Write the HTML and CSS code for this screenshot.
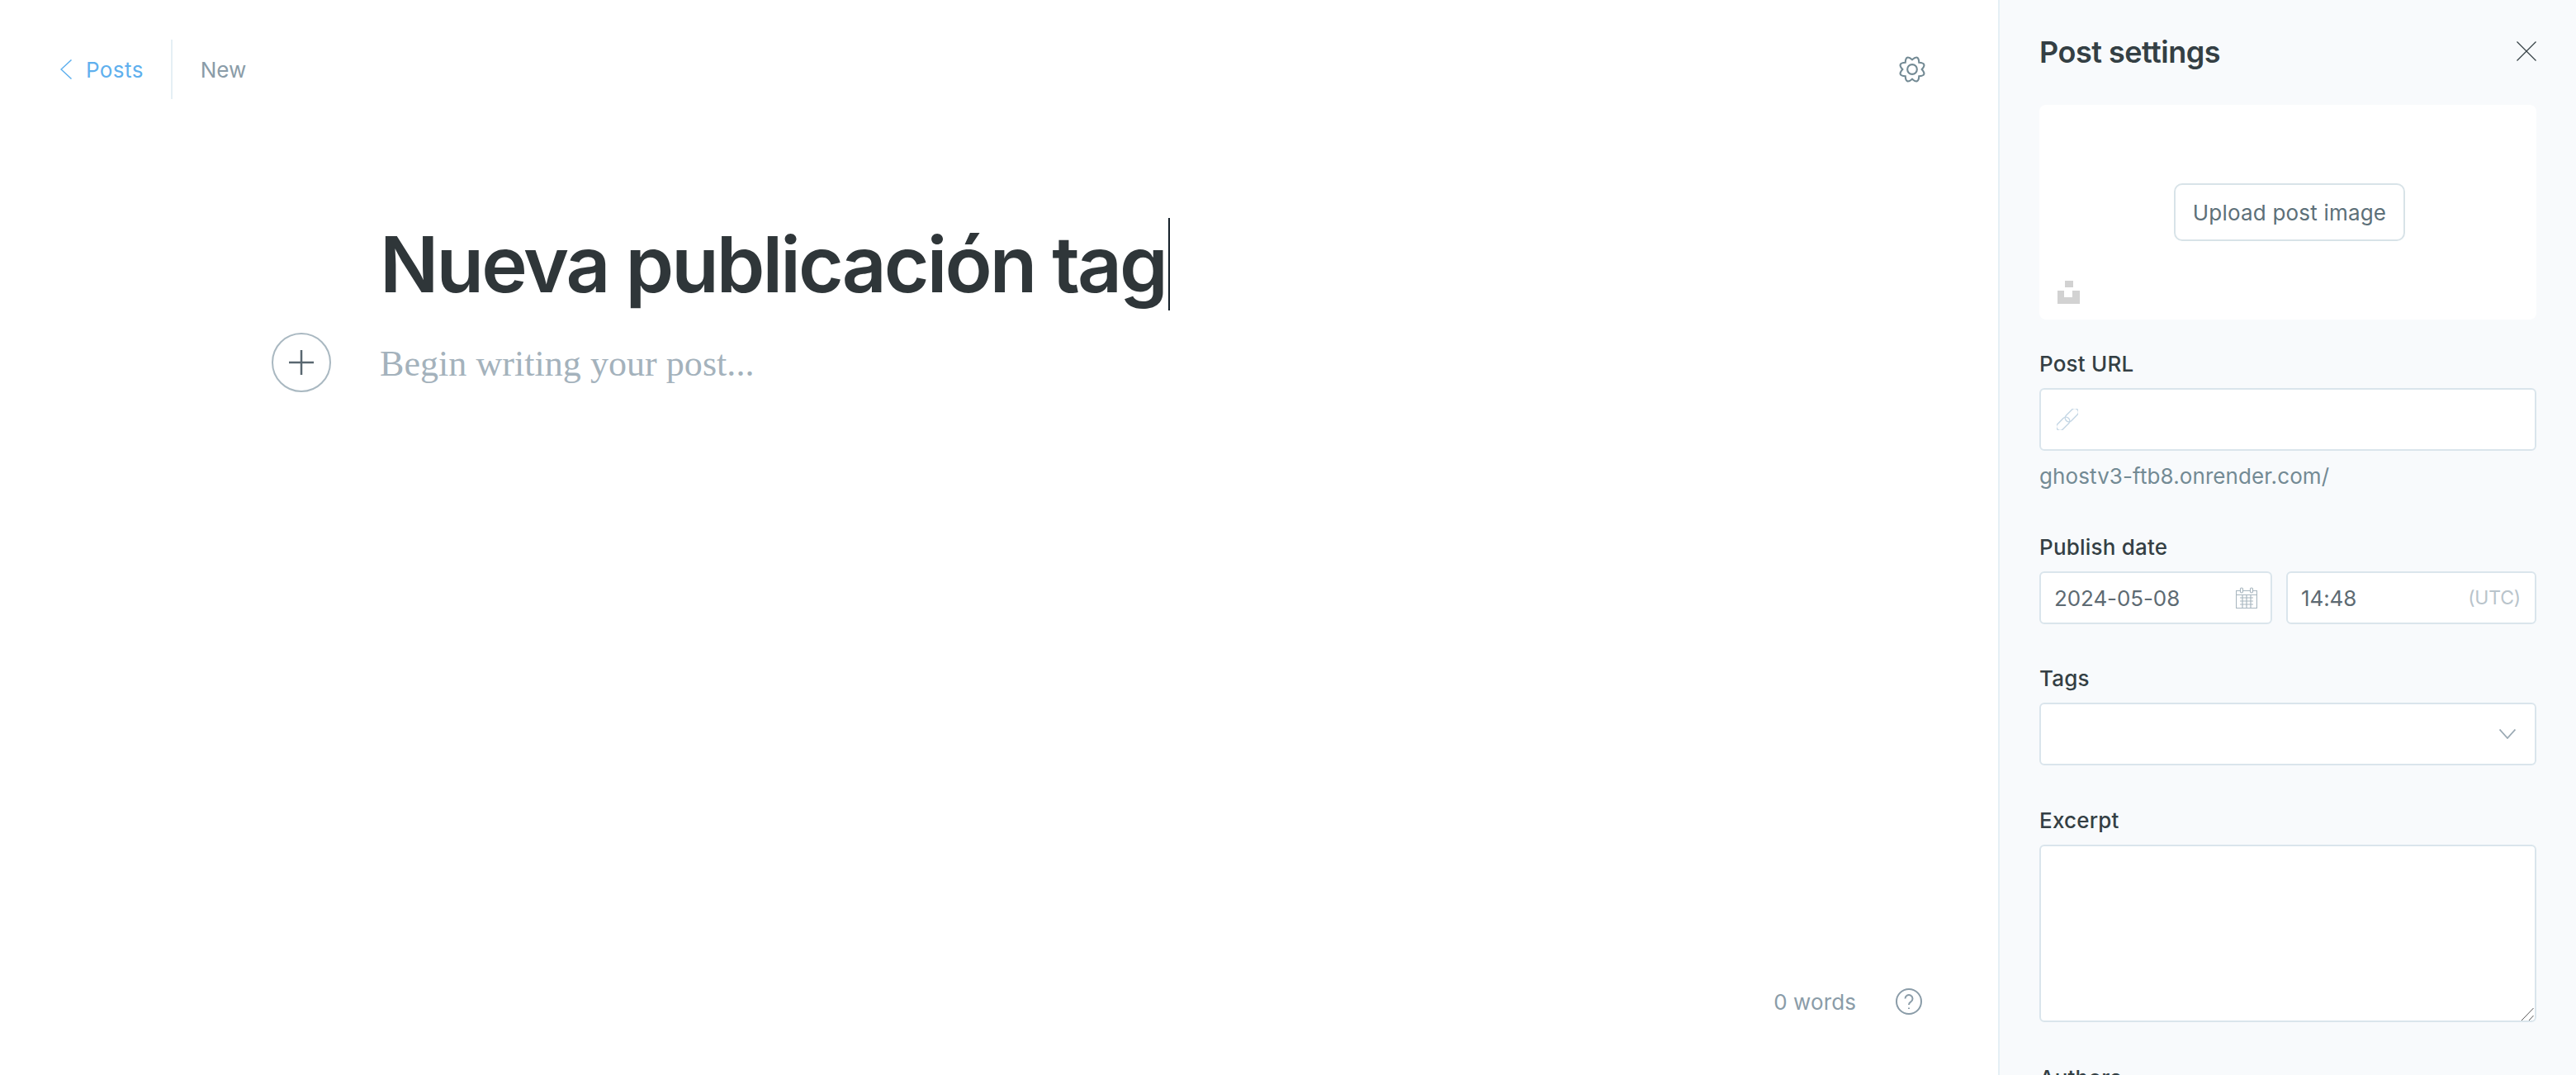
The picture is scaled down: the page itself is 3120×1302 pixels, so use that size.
FILE: index.html
```html
<!DOCTYPE html>
<html lang="en">
<head>
<meta charset="utf-8">
<title>Post settings</title>
<link rel="stylesheet" href="styles.css">
</head>
<body>
<div class="app">
  <main class="editor">
    <header class="topbar">
      <div class="crumbs">
        <a class="back">
          <svg class="back-icon" viewBox="0 0 14 24"><path d="M13.500.500 1 12l12.500 11.500"/></svg>
          <span>Posts</span>
        </a>
        <span class="status">New</span>
      </div>
      <svg class="gear" viewBox="0 0 32 32"><path d="M27 16Q33.500 23.300 23.800 23.800 23.300 33.500 16 27 8.700 33.500 8.200 23.800-1.500 23.300 5 16-1.500 8.700 8.200 8.200 8.700-1.500 16 5 23.300-1.500 23.800 8.200 33.500 8.700 27 16Z"/><circle cx="16" cy="16" r="5.500"/></svg>
    </header>
    <section class="content">
      <div class="column">
        <h1 class="title">Nueva publicación tag<span class="caret"></span></h1>
        <div class="body-line">
          <span class="plus">
            <svg viewBox="0 0 32 32"><path d="M16 1v30M1 16h30"/></svg>
          </span>
          <p class="placeholder">Begin writing your post...</p>
        </div>
      </div>
    </section>
    <footer class="status-bar">
      <span class="words">0 words</span>
      <span class="help">
        <svg viewBox="0 0 32 32"><circle cx="16" cy="16" r="15"/><path d="M11.500 12.500a4.500 4.500 0 1 1 6.800 3.900c-1.500.9-2.300 1.700-2.300 3.600"/><path d="M16 23.500v1.500"/></svg>
      </span>
    </footer>
  </main>
  <aside class="settings">
    <header class="settings-head">
      <h2>Post settings</h2>
      <svg class="close" viewBox="0 0 24 24"><path d="M.5.5l23 23M23.500.5l-23 23"/></svg>
    </header>
    <div class="image-box">
      <span class="upload">Upload post image</span>
      <svg class="unsplash" viewBox="0 0 28 28"><path d="M10 0h10v8H10zM1 12h8v8h10v-8h9v16H1z"/></svg>
    </div>
    <div class="field field-url">
      <label class="label">Post URL</label>
      <div class="input input-tall">
        <svg class="link-icon" viewBox="0 0 26 26"><g transform="rotate(-45 13 13)"><rect x="-4" y="8.500" width="19" height="9" rx="4.500"/><rect x="11" y="8.500" width="19" height="9" rx="4.500"/></g></svg>
      </div>
      <p class="hint">ghostv3-ftb8.onrender.com/</p>
    </div>
    <div class="field field-date">
      <label class="label">Publish date</label>
      <div class="date-row">
        <div class="input input-date">
          <span>2024-05-08</span>
          <svg class="calendar" viewBox="0 0 26 26"><path d="M.5 4.500h25v21H.5zM.5 9.500h25M5 13h16M5 17h16M5 21h16M8 10v15M13 10v15M18 10v15"/><rect x="5.500" y="1" width="3" height="6" rx="1.500"/><rect x="17.500" y="1" width="3" height="6" rx="1.500"/></svg>
        </div>
        <div class="input input-time">
          <span>14:48</span>
          <span class="tz">(UTC)</span>
        </div>
      </div>
    </div>
    <div class="field">
      <label class="label">Tags</label>
      <div class="input input-tall input-select">
        <svg class="chevron" viewBox="0 0 20 12"><path d="M.5.500 10 11 19.500.500"/></svg>
      </div>
    </div>
    <div class="field field-excerpt">
      <label class="label">Excerpt</label>
      <div class="excerpt-wrap">
        <textarea class="excerpt"></textarea>
        <svg class="grip" viewBox="0 0 15 15"><path d="M0 15 14.500 0M9 15l5.500-6"/></svg>
      </div>
    </div>
    <div class="field">
      <label class="label">Authors</label>
    </div>
  </aside>
</div>
</body>
</html>
```

FILE: styles.css
```css
* { box-sizing: border-box; }
html, body { margin: 0; height: 1302px; overflow: hidden; background: #fff; }
body { font-family: Inter, "Liberation Sans", sans-serif; color: #343f44; }
.app { display: flex; height: 1302px; overflow: hidden; }

.editor { flex: 1; min-width: 0; display: flex; flex-direction: column; }
.topbar { display: flex; align-items: center; justify-content: space-between; padding: 48px 87px 0 73px; height: 120px; }
.crumbs { display: flex; align-items: center; height: 72px; font-size: 26px; letter-spacing: .4px; }
.back { display: flex; align-items: center; gap: 17px; height: 72px; padding-right: 33px; border-right: 2px solid #e5eff5; color: #5fb0ee; }
.back-icon { width: 14px; height: 24px; fill: none; stroke: #5fb0ee; stroke-width: 1.500; }
.status { margin-left: 34px; color: #8a9ca8; letter-spacing: 0; }
.gear { width: 34px; height: 34px; overflow: visible; fill: none; stroke: #738a94; stroke-width: 2; }

.content { flex: 1; padding: 144px 0 0 460px; }
.title { margin: 0; display: flex; align-items: center; height: 112px; font-size: 94px; line-height: 112px; font-weight: 600; letter-spacing: -2.900px; color: #2f3639; white-space: nowrap; }
.caret { width: 2px; height: 112px; margin-left: 3px; background: #15212a; }
.body-line { position: relative; margin-top: 39px; }
.plus { position: absolute; left: -131px; top: -12px; width: 72px; height: 72px; display: flex; align-items: center; justify-content: center; border: 2px solid #a9b8c1; border-radius: 50%; }
.plus svg { width: 32px; height: 32px; fill: none; stroke: #596770; stroke-width: 2.500; }
.placeholder { margin: 0; font-family: "Liberation Serif", serif; font-size: 44px; line-height: 52px; color: #a4b2bc; letter-spacing: .05px; }

.status-bar { display: flex; align-items: center; justify-content: flex-end; gap: 48px; height: 72px; padding-right: 92px; margin-bottom: 53px; }
.words { font-size: 26px; letter-spacing: .1px; color: #8a9ca8; }
.help { display: flex; }
.help svg { width: 32px; height: 32px; fill: none; stroke: #8a9ca8; stroke-width: 2; }

.settings { width: 700px; flex: none; padding: 0 48px; background: #f8fafc; border-left: 2px solid #e5eff5; overflow: hidden; }
.settings-head { display: flex; align-items: center; justify-content: space-between; height: 127px; padding-bottom: 1px; }
.settings-head h2 { margin: 0; font-size: 36px; font-weight: 600; letter-spacing: -.5px; color: #343f44; }
.close { width: 24px; height: 24px; margin-bottom: 3px; fill: none; stroke: #343f44; stroke-width: 1.200; }

.image-box { position: relative; height: 260px; display: flex; align-items: center; justify-content: center; background: #fff; border-radius: 8px; margin-bottom: 39px; }
.upload { display: flex; align-items: center; justify-content: center; width: 280px; height: 70px; margin-left: 4px; border: 2px solid #d8e3e8; border-radius: 10px; font-size: 26px; letter-spacing: .2px; color: #5d7079; background: #fff; }
.unsplash { position: absolute; left: 21px; bottom: 19px; width: 28px; height: 28px; fill: #d2d2d2; }

.field { margin-bottom: 52px; }
.field-url { margin-bottom: 56px; }
.field-date { margin-bottom: 51px; }
.field-excerpt { margin-bottom: 53px; }
.label { display: block; height: 30px; line-height: 30px; margin-bottom: 14px; font-size: 26px; font-weight: 500; letter-spacing: .2px; color: #343f44; }
.input { display: flex; align-items: center; height: 64px; background: #fff; border: 2px solid #dae5ec; border-radius: 6px; font-size: 26px; letter-spacing: -.1px; color: #5d6a72; }
.input-tall { height: 76px; }
.link-icon { width: 26px; height: 26px; margin-left: 19px; fill: none; stroke: #c5d7e5; stroke-width: 1.500; }
.hint { margin: 16px 0 0; line-height: 30px; font-size: 26px; letter-spacing: .1px; color: #738a94; }
.date-row { display: flex; gap: 17px; }
.input-date { width: 282px; padding: 0 16px; justify-content: space-between; }
.calendar { width: 26px; height: 26px; fill: none; stroke: #a9b7c0; stroke-width: 1.200; }
.calendar rect { fill: #fff; }
.input-time { flex: 1; padding: 0 17px 0 16px; justify-content: space-between; }
.tz { font-size: 23px; letter-spacing: -.2px; color: #b9c4cb; }
.input-select { justify-content: flex-end; padding-right: 23px; }
.chevron { width: 20px; height: 12px; fill: none; stroke: #9baab4; stroke-width: 1.800; }
.excerpt-wrap { position: relative; height: 215px; }
.excerpt { display: block; width: 100%; height: 100%; padding: 12px; background: #fff; border: 2px solid #dae5ec; border-radius: 6px; resize: none; }
.grip { position: absolute; right: 3px; bottom: 2px; width: 15px; height: 15px; fill: none; stroke: #555; stroke-width: 1; }
```
